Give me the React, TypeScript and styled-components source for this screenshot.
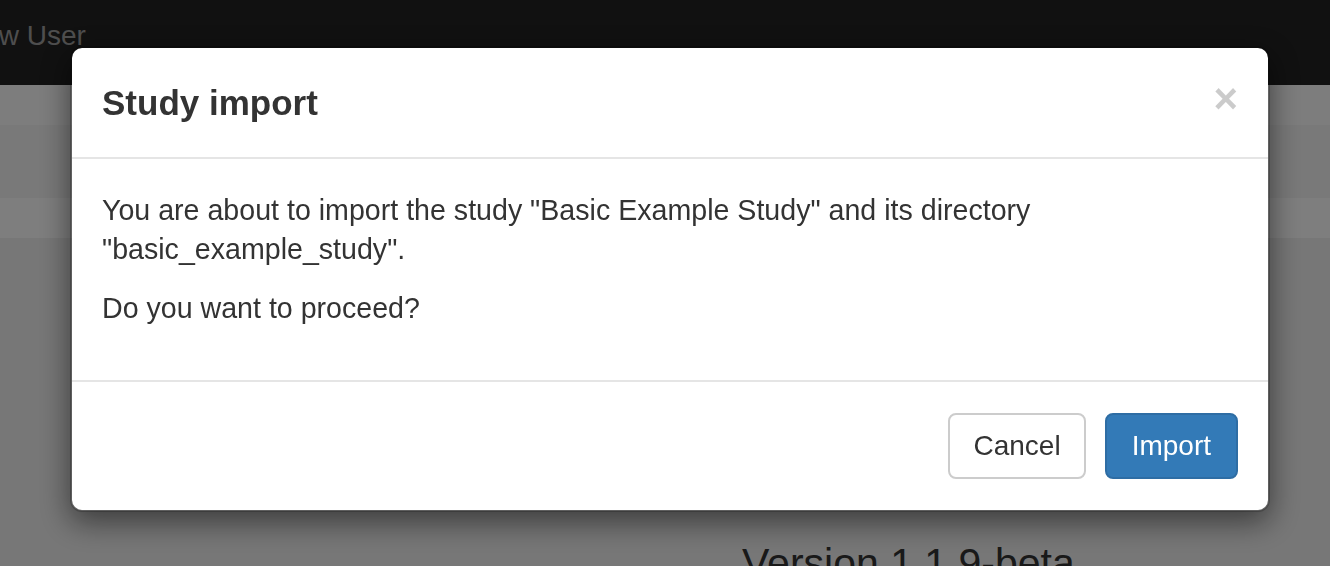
import styled, { createGlobalStyle } from "styled-components";

const GlobalStyle = createGlobalStyle`
	html, body {
		margin: 0;
		padding: 0;
		height: 100%;
		overflow: hidden;
	}
	body {
		font-family: "Liberation Sans", Arial, Helvetica, sans-serif;
		color: #333;
		background: #eeeeee;
	}
	* {
		box-sizing: border-box;
	}
`;

const Page = styled.div`
	height: 566px;
	display: flex;
	flex-direction: column;
	overflow: hidden;
`;

const NavBar = styled.div`
	height: 85px;
	background: #222;
	display: flex;
	align-items: center;
	overflow: hidden;
	flex-shrink: 0;
`;

const NavLink = styled.span`
	font-size: 28px;
	color: #9d9d9d;
	margin-left: -37px;
	margin-top: -14px;
	white-space: nowrap;
`;

const Band = styled.div<{ $height: number; $bg: string }>`
	height: ${(p) => p.$height}px;
	background: ${(p) => p.$bg};
	flex-shrink: 0;
`;

const Content = styled.div`
	flex: 1;
	background: #eeeeee;
	padding: 303px 0 0 742px;
`;

const Version = styled.div`
	font-size: 41px;
	line-height: 1.1;
	color: #333;
	white-space: nowrap;
`;

const Backdrop = styled.div`
	position: fixed;
	inset: 0;
	background: rgba(0, 0, 0, 0.5);
`;

const Modal = styled.div`
	position: fixed;
	top: 46px;
	left: 70px;
	width: 1200px;
	background: #fff;
	border: 2px solid rgba(0, 0, 0, 0.2);
	background-clip: padding-box;
	border-radius: 12px;
	box-shadow: 0 10px 30px rgba(0, 0, 0, 0.5);
	display: flex;
	flex-direction: column;
`;

const Header = styled.div`
	display: flex;
	align-items: flex-start;
	justify-content: space-between;
	padding: 30px 30px 29px;
	border-bottom: 2px solid #e5e5e5;
`;

const Title = styled.h4`
	margin: 0;
	font-size: 35px;
	line-height: 50px;
	font-weight: bold;
	color: #333;
`;

const Close = styled.button`
	padding: 0;
	margin-top: 0;
	border: 0;
	background: transparent;
	font-family: "Liberation Sans", Arial, Helvetica, sans-serif;
	font-size: 42px;
	font-weight: bold;
	line-height: 1;
	color: #000;
	opacity: 0.2;
	cursor: pointer;
`;

const Body = styled.div`
	padding: 32px 30px 32px;
`;

const Paragraph = styled.p`
	margin: 0 0 20px;
	font-size: 28.6px;
	line-height: 39px;
`;

const Footer = styled.div`
	display: flex;
	justify-content: flex-end;
	gap: 19px;
	padding: 31px 30px 31px;
	border-top: 2px solid #e5e5e5;
`;

const Button = styled.button<{ $primary?: boolean }>`
	font-family: "Liberation Sans", Arial, Helvetica, sans-serif;
	font-size: 28px;
	line-height: 38px;
	padding: 12px ${(p) => (p.$primary ? "25px" : "23px")};
	border-radius: 8px;
	border: 2px solid ${(p) => (p.$primary ? "#2e6da4" : "#ccc")};
	background: ${(p) => (p.$primary ? "#337ab7" : "#fff")};
	color: ${(p) => (p.$primary ? "#fff" : "#333")};
	cursor: pointer;
`;

export default function App() {
	return (
		<>
			<GlobalStyle />
			<Page>
				<NavBar>
					<NavLink>New User</NavLink>
				</NavBar>
				<Band $height={40} $bg="#fafafa" />
				<Band $height={73} $bg="#f3f3f3" />
				<Band $height={40} $bg="#fcfcfc" />
				<Content>
					<Version>Version 1.1.9-beta</Version>
				</Content>
			</Page>
			<Backdrop />
			<Modal>
				<Header>
					<Title>Study import</Title>
					<Close aria-label="Close">×</Close>
				</Header>
				<Body>
					<Paragraph>
						You are about to import the study "Basic Example Study" and its directory
						<br />
						"basic_example_study".
					</Paragraph>
					<Paragraph>Do you want to proceed?</Paragraph>
				</Body>
				<Footer>
					<Button>Cancel</Button>
					<Button $primary>Import</Button>
				</Footer>
			</Modal>
		</>
	);
}
